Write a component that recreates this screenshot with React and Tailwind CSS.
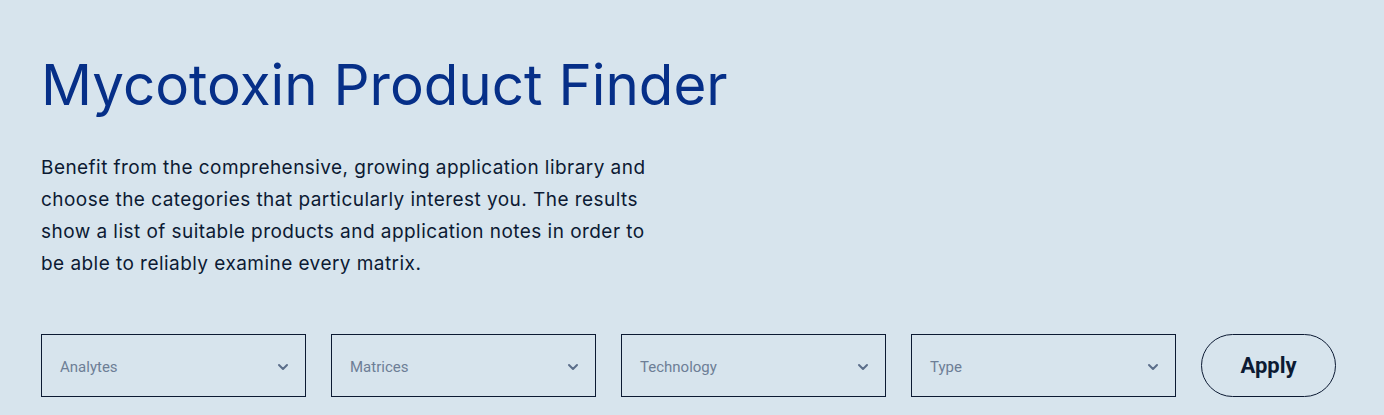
import { ChevronDown } from 'lucide-react';

const filters = ['Analytes', 'Matrices', 'Technology', 'Type'];

function FilterSelect({ label }) {
  return (
    <button
      type="button"
      className="flex h-[63px] w-[265px] items-center justify-between border border-[#0c1a33] pl-[18px] pr-[14px] pt-[3px] text-left"
    >
      <span className="font-['Roboto'] text-[15px] text-[#6d7e96]">{label}</span>
      <ChevronDown size={16} strokeWidth={3} className="text-[#5b6e8a]" />
    </button>
  );
}

export default function App() {
  return (
    <div
      className="min-h-[415px] bg-[#d7e4ed] px-[41px] pt-[50px]"
      style={{ fontFamily: 'Inter, "Noto Sans", sans-serif' }}
    >
      <h1 className="text-[56.5px] font-normal leading-[70px] text-[#062f88]">Mycotoxin Product Finder</h1>

      <p className="mt-[32px] w-[615px] text-[19px] leading-[32px] tracking-[0.45px] text-[#0c1a33]">
        Benefit from the comprehensive, growing application library and choose the categories that particularly
        interest you. The results show a list of suitable products and application notes in order to be able to
        reliably examine every matrix.
      </p>

      <div className="mt-[54px] flex items-center gap-[25px]">
        {filters.map(f => (
          <FilterSelect key={f} label={f} />
        ))}
        <button
          type="button"
          className="h-[63px] w-[135px] rounded-full border border-[#0c1a33] font-['Roboto'] text-[22px] font-bold text-[#0c1a33]"
        >
          Apply
        </button>
      </div>
    </div>
  );
}
